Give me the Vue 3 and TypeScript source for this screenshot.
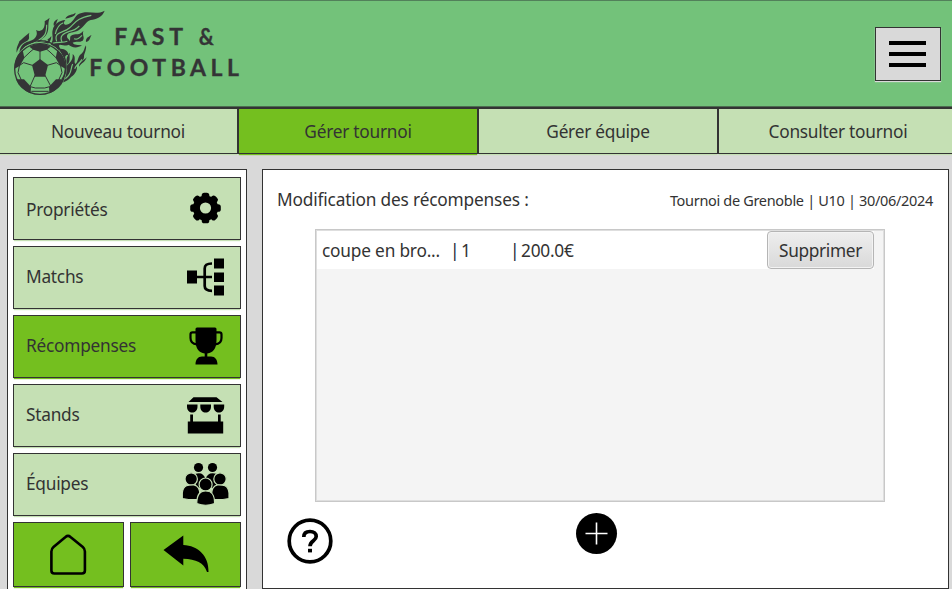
<script setup lang="ts">
import { ref } from 'vue'

interface Section {
  id: string
  label: string
}

interface Reward {
  name: string
  rank: number
  price: string
}

const tabs: string[] = ['Nouveau tournoi', 'Gérer tournoi', 'Gérer équipe', 'Consulter tournoi']
const activeTab = ref('Gérer tournoi')

const sections: Section[] = [
  { id: 'gear', label: 'Propriétés' },
  { id: 'bracket', label: 'Matchs' },
  { id: 'trophy', label: 'Récompenses' },
  { id: 'stand', label: 'Stands' },
  { id: 'team', label: 'Équipes' },
]
const activeSection = ref('trophy')

const rewards = ref<Reward[]>([{ name: 'coupe en bro...', rank: 1, price: '200.0€' }])

function removeReward(index: number): void {
  rewards.value.splice(index, 1)
}
</script>

<template>
  <div class="screen">
    <header class="header">
      <svg class="logo" viewBox="0 0 780 312" width="260" height="104">
        <g transform="translate(30 24)" fill="#343436">
          <path d="M30 150C24 122 36 105 58 100C80 93 84 78 78 66C98 76 106 56 104 40C110 36 116 32 119 30C112 46 118 60 112 74C106 90 90 92 92 100C108 100 118 92 124 84C124 98 116 106 110 112C80 104 50 116 30 150Z" />
          <path d="M20 134C18 116 26 110 28 100C32 96 46 84 58 74C54 86 62 90 52 98C36 106 28 112 20 134Z" />
          <path d="M122 108C134 96 124 80 128 66C132 48 148 38 166 36C156 48 166 54 176 48C196 38 192 18 218 14C242 10 262 20 284 8C278 26 258 34 242 36C226 42 224 54 210 64C196 76 180 70 172 80C166 92 184 94 180 106C174 118 160 110 150 110C144 112 148 120 158 128C140 128 128 120 122 108Z" />
          <path d="M166 32C172 18 188 22 197 14C196 26 182 28 166 32Z" />
          <path d="M132 54C128 44 136 36 144 34C138 42 142 48 132 54Z" />
          <path d="M182 84C196 74 210 84 220 68C216 84 226 88 218 98C208 104 198 98 188 104C192 112 204 110 216 112C202 122 184 120 174 108C184 102 178 92 182 84Z" />
          <path d="M228 102C226 90 236 86 245 81C238 90 242 98 228 102Z" />
          <path d="M152 122C166 122 176 132 176 142C168 138 162 146 166 160C158 148 152 138 152 122Z" />
          <path d="M150 214C170 206 160 186 170 174C178 164 190 158 188 138C200 148 190 160 196 168C206 162 202 144 216 136C224 128 222 120 228 112C230 128 222 136 222 146C222 158 210 162 200 170C204 184 196 198 184 206C172 218 164 224 146 224Z" />
          <path d="M173 170C166 158 170 144 180 134C176 146 184 152 173 170Z" />
          <path d="M207 176C206 164 218 160 230 148C226 162 216 164 207 176Z" />
          <g fill="none" stroke="#73c27a" stroke-width="3.500">
            <path d="M38 126C46 108 70 110 84 98C102 88 110 80 110 50" />
            <path d="M60 110C84 100 96 106 114 96" />
            <path d="M140 100C130 70 160 76 178 60C194 46 200 30 244 22" />
            <path d="M136 78C140 58 150 48 160 44M156 102C148 86 158 76 178 70C190 68 200 62 208 54" />
            <path d="M192 92C202 96 208 90 216 82M128 106C142 100 158 106 172 100" />
            <path d="M166 212C188 196 180 184 188 168M194 182C198 172 208 166 216 154" />
          </g>
          <circle cx="90" cy="183" r="80" fill="#73c27a" />
          <circle cx="90" cy="183" r="76" fill="#73c27a" stroke="#343436" stroke-width="4" />
          <path d="M34 122C66 90 114 90 146 122M150 126C174 154 172 190 156 214" fill="none" stroke="#343436" stroke-width="4" />
          <path d="M90 153L114 171L105 206H75L66 171Z" />
          <path d="M58 116C78 104 102 104 122 116L110 125L90 131L70 125Z" />
          <path d="M14 174C16 150 26 136 38 126L43 150L30 173L14 182Z" />
          <path d="M166 174C164 150 154 136 142 126L137 150L150 173L166 182Z" />
          <path d="M18 214L42 214L63 236L62 256C42 248 26 236 18 214Z" />
          <path d="M162 214L138 214L117 236L118 256C138 248 154 236 162 214Z" />
          <path d="M64 250H116M90 126V158M112 172L139 164L151 172M104 200L122 234M76 200L61 234M67 172L41 164L29 172M29 170L24 194L34 216M151 170L156 194L146 216M61 236L76 240H104L119 236M41 150L60 132L72 122M139 150L120 132L108 122" fill="none" stroke="#343436" stroke-width="3" />
        </g>
        <g class="brand">
          <text x="343" y="134" textLength="206">FAST</text>
          <text x="596" y="134" textLength="45" lengthAdjust="spacingAndGlyphs">&amp;</text>
          <text x="268" y="227" textLength="449">FOOTBALL</text>
        </g>
      </svg>
      <button class="menu" aria-label="Menu">
        <span></span>
        <span></span>
        <span></span>
      </button>
    </header>

    <nav class="tabs">
      <button
        v-for="tab in tabs"
        :key="tab"
        class="tab"
        :class="{ active: tab === activeTab }"
        @click="activeTab = tab"
      >{{ tab }}</button>
    </nav>

    <div class="body">
      <aside class="sidebar">
        <button
          v-for="s in sections"
          :key="s.id"
          class="item"
          :class="[{ active: s.id === activeSection }, s.id]"
          @click="activeSection = s.id"
        >
          <span>{{ s.label }}</span>
          <svg v-if="s.id === 'gear'" width="48" height="48" viewBox="0 0 48 48">
            <g transform="translate(23.500 24)">
              <g v-for="a in 8" :key="a" :transform="`rotate(${a * 45})`">
                <rect x="-3.800" y="-15.300" width="7.600" height="8" rx="2.600" />
              </g>
              <circle r="9.100" fill="none" stroke="#000" stroke-width="7" />
            </g>
          </svg>
          <svg v-else-if="s.id === 'bracket'" width="48" height="48" viewBox="0 0 48 48">
            <path d="M5 17.500h10v13h-10zM32 5.500h10v10h-10zM32 19.500h10v9.500h-10zM32 32.500h10v10h-10z" />
            <path d="M15 24H30M30 10.500C25 10.500 22.700 11.500 22.700 15.500V33C22.700 36.500 25 37.800 30 37.800" fill="none" stroke="#000" stroke-width="2.700" />
          </svg>
          <svg v-else-if="s.id === 'trophy'" width="48" height="48" viewBox="0 0 48 48">
            <path d="M15 5.500H33Q34.500 5.500 34.500 7V18C34.500 27 31 30.500 25.300 31.500V34.500H29C33 34.500 35.500 37.500 35.500 42.500H13.500C13.500 37.500 16 34.500 20 34.500H22.700V31.500C17 30.500 13.500 27 13.500 18V7Q13.500 5.500 15 5.500Z" />
            <path d="M14 10.300H10.500Q8.500 10.300 8.500 12.500V16C8.500 19.500 11 22 15 22.300M34 10.300H37.500Q39.500 10.300 39.500 12.500V16C39.500 19.500 37.500 22 33 22.300" fill="none" stroke="#000" stroke-width="2.200" />
          </svg>
          <svg v-else-if="s.id === 'stand'" width="48" height="48" viewBox="0 0 48 48">
            <path d="M11.500 6.300H34.500L40.500 11H6.500ZM5 13.500H15.500V15.500C15.500 23.500 5 23.500 5 15.500ZM18.300 13.500H29V15.500C29 23.500 18.300 23.500 18.300 15.500ZM31.700 13.500H42.200V15.500C42.200 23.500 31.700 23.500 31.700 15.500ZM8.200 23.500H11V30.500H36V23.500H38.700V30.500H41.200V42.500H5.800V30.500H8.200Z" />
          </svg>
          <svg v-else width="48" height="48" viewBox="0 0 48 48">
            <g>
              <circle cx="16.500" cy="7.500" r="4.600" />
              <circle cx="30.500" cy="7.500" r="4.600" />
              <path d="M13 14Q21 11 23.500 19L22 28H14ZM35 14Q26 11 23.500 19L26 28H34Z" />
            </g>
            <g stroke="#c5e0b4" stroke-width="1.200">
              <circle cx="9.200" cy="19" r="6.200" />
              <circle cx="38" cy="19" r="6.200" />
              <path d="M.3 38.500V33C1 24.500 7 24.700 12 24.800C17 26 18 30 18 35V39.500Q9 40.200.3 38.500ZM47 38.500V33C46.300 24.500 40.500 24.700 35.500 24.800C30.500 26 29.500 30 29.500 35V39.500Q38.500 40.200 47 38.500Z" />
              <circle cx="23.600" cy="24.500" r="6.500" />
              <path d="M14.800 43.500C14.800 34 18 31 23.600 31C29.500 31 32.600 34 32.600 43.500Q23.600 47 14.800 43.500Z" />
            </g>
          </svg>
        </button>
        <div class="pair">
          <button class="square" aria-label="Accueil">
            <svg width="48" height="48" viewBox="0 0 48 48">
              <path d="M20.500 5.500Q23 3.300 25.500 5.500L37.800 15.500Q39.900 17.300 39.900 20V39Q39.900 42 36.900 42H9.400Q6.400 42 6.400 39V20Q6.400 17.300 8.500 15.500Z" transform="translate(0 .5)" fill="none" stroke="#000" stroke-width="2.600" />
            </svg>
          </button>
          <button class="square" aria-label="Retour">
            <svg width="48" height="48" viewBox="0 0 48 48">
              <path d="M1.500 19L21.300 4.500V14C36 14.500 47 25 46.500 41H45C42 32 34 28 21.300 27.800V34.500Z" />
            </svg>
          </button>
        </div>
      </aside>

      <main class="panel">
        <div class="title-row">
          <h1>Modification des récompenses :</h1>
          <p>Tournoi de Grenoble | U10 | 30/06/2024</p>
        </div>
        <div class="list">
          <div v-for="(r, i) in rewards" :key="r.name" class="row">
            <span class="name">{{ r.name }}</span>
            <span class="rank"><i>|</i>{{ r.rank }}</span>
            <span class="price"><i>|</i>{{ r.price }}</span>
            <button class="delete" @click="removeReward(i)">Supprimer</button>
          </div>
        </div>
        <div class="actions">
          <svg class="help" width="46" height="46" viewBox="0 0 46 46">
            <circle cx="23" cy="23" r="20.800" fill="#fff" stroke="#000" stroke-width="3.700" />
            <path d="M16.800 19C16.800 15.500 19 13.500 23 13.500C27 13.500 29.200 15.800 29.200 18.500C29.200 23 23 22.500 23 28.300" fill="none" stroke="#000" stroke-width="3.700" />
            <path d="M21 30.800h4v3.600h-4z" />
          </svg>
          <svg class="add" width="42" height="42" viewBox="0 0 42 42">
            <circle cx="20.500" cy="21.500" r="20.500" />
            <path d="M20.500 10.500V32.500M9.500 21.500H31.500" stroke="#fff" stroke-width="1.600" />
          </svg>
        </div>
      </main>
    </div>
  </div>
</template>

<style>
body {
  background: #d9d9d9;
  overflow: hidden;
}
</style>

<style scoped>
.screen {
  width: 952px;
  height: 589px;
  overflow: hidden;
  box-sizing: border-box;
  display: flex;
  flex-direction: column;
  background: #d9d9d9;
  font-family: "Noto Sans", "Open Sans", sans-serif;
  font-size: 17.3px;
  letter-spacing: -0.25px;
  color: #333;
}
.screen * {
  box-sizing: border-box;
}
button {
  font: inherit;
  color: inherit;
  letter-spacing: inherit;
  margin: 0;
  padding: 0;
}
.header {
  flex: none;
  height: 109px;
  display: flex;
  justify-content: space-between;
  background: #73c27a;
  border-top: 1px solid #52805a;
  border-bottom: 2px solid #333;
  box-shadow: inset 0 -1px #4c6d50;
}
.logo {
  display: block;
  margin-top: -1px;
}
.brand {
  font: 700 69px Lato, sans-serif;
  letter-spacing: 0;
  fill: #343436;
  stroke: #343436;
  stroke-width: 1px;
}
.menu {
  width: 66px;
  height: 54px;
  margin: 26px 11px 0 0;
  padding: 0 1px 1px 0;
  display: flex;
  flex-direction: column;
  align-items: center;
  justify-content: center;
  gap: 7px;
  background: #d9d9d9;
  border: 1px solid #333;
  box-shadow: 0 1px 1px #d9d9d9;
}
.menu span {
  width: 37px;
  height: 4px;
  background: #000;
}
.tabs {
  flex: none;
  display: flex;
  margin-left: -2px;
}
.tab {
  flex: none;
  width: 240px;
  height: 45px;
  padding-top: 1px;
  background: #c5e0b4;
  border: 1px solid #333;
  border-top: 0;
  box-shadow: 0 2px 1px -1px #c5e0b4;
}
.tab.active {
  background: #74bf1f;
  box-shadow: 0 2px 1px -1px #74bf1f;
}
.body {
  flex: none;
  display: flex;
  align-items: flex-start;
  gap: 15px;
  padding: 15px 3px 0 7px;
}
.sidebar {
  width: 240px;
  height: 426px;
  padding: 7px 5px;
  display: flex;
  flex-direction: column;
  gap: 6px;
  background: #fff;
  border: 1px solid #333;
}
.item {
  flex: none;
  height: 63px;
  padding: 0 10px 0 12px;
  display: flex;
  align-items: center;
  justify-content: space-between;
  background: #c5e0b4;
  border: 1px solid #333;
  box-shadow: 0 2px 1px -1px #c5e0b4;
}
.item span,
.item svg {
  margin-bottom: 2px;
}
.item.gear span {
  margin-bottom: 0;
  padding-top: 1px;
}
.item.active,
.square {
  background: #74bf1f;
  box-shadow: 0 2px 1px -1px #74bf1f;
}
.pair {
  display: flex;
  gap: 6px;
}
.square {
  flex: 1;
  height: 65px;
  display: flex;
  align-items: center;
  justify-content: center;
  border: 1px solid #333;
}
.panel {
  width: 687px;
  height: 420px;
  background: #fff;
  border: 1px solid #333;
}
.title-row {
  height: 59px;
  padding: 0 15px 0 14px;
  display: flex;
  justify-content: space-between;
  align-items: center;
}
h1,
p {
  margin: 0;
  font-weight: 400;
}
h1 {
  font-size: 17.3px;
  letter-spacing: -0.18px;
}
p {
  font-size: 14.500px;
  letter-spacing: -0.32px;
}
.list {
  width: 570px;
  height: 273px;
  margin-left: 52px;
  padding: 0 10px 0 0;
  background: #f4f4f4;
  border: 1px solid #c8c8c8;
  box-shadow: inset 0 0 0 1px #dedede;
}
.row {
  margin: 1px 0 0 1px;
  height: 38px;
  padding-left: 5px;
  display: flex;
  align-items: center;
  background: #fff;
}
.name {
  width: 128px;
  letter-spacing: -0.2px;
}
.rank {
  width: 60px;
}
.price {
  flex: 1;
}
i {
  display: inline-block;
  width: 11px;
  font-style: normal;
  color: #223;
}
.delete {
  width: 107px;
  height: 38px;
  letter-spacing: -0.35px;
  border: 1px solid #b5b5b5;
  border-radius: 4px;
  background: linear-gradient(#eee, #d9d9d9);
  box-shadow: inset 0 0 0 1px #f3f3f3;
}
.actions {
  display: flex;
  align-items: flex-start;
  padding: 10px 0 0 24px;
}
.help {
  margin-top: 6px;
}
.add {
  margin-left: 243px;
}
</style>
